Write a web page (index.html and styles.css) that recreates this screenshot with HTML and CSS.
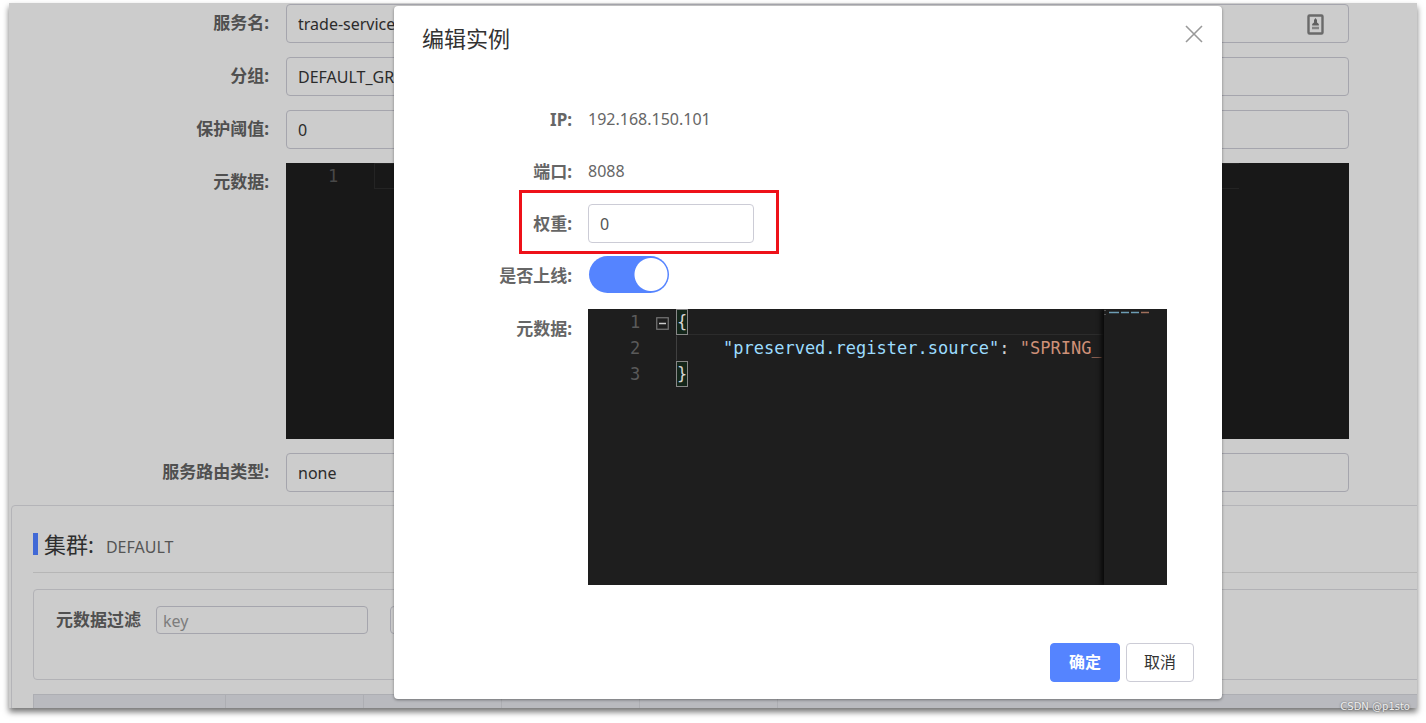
FILE: index.html
```html
<!DOCTYPE html>
<html lang="zh-CN">
<head>
<meta charset="utf-8">
<title>编辑实例</title>
<link rel="stylesheet" href="styles.css">
</head>
<body>
<div class="frame">
  <main class="page">
    <form class="service-form">
      <div class="row">
        <label class="label" for="svc-name">服务名:</label>
        <div class="field">
          <input class="input" id="svc-name" type="text" value="trade-service" readonly>
          <svg class="fill-icon" viewBox="0 0 17 21" aria-hidden="true">
            <rect x="1.5" y="1.5" width="14" height="18" rx="1" fill="none" stroke="#6a6a6a" stroke-width="2.4"/>
            <path d="M8.5 4l1.500 2v2.500l1.800 1.500v1.500H5.200V10L7 8.500V6z" fill="#606060"/>
            <path d="M5 14h7" stroke="#858585" stroke-width="2.500"/>
          </svg>
        </div>
      </div>
      <div class="row">
        <label class="label" for="svc-group">分组:</label>
        <div class="field"><input class="input" id="svc-group" type="text" value="DEFAULT_GROUP" readonly></div>
      </div>
      <div class="row">
        <label class="label" for="svc-threshold">保护阈值:</label>
        <div class="field"><input class="input" id="svc-threshold" type="text" value="0" readonly></div>
      </div>
      <div class="row">
        <span class="label">元数据:</span>
        <div class="field">
          <div class="editor editor-dim">
            <div class="gutter gutter-narrow"><span class="line-no">1</span></div>
            <div class="code"><div class="code-line current"></div></div>
            <div class="side"></div>
          </div>
        </div>
      </div>
      <div class="row">
        <label class="label" for="svc-route">服务路由类型:</label>
        <div class="field"><input class="input" id="svc-route" type="text" value="none" readonly></div>
      </div>
    </form>
    <section class="cluster">
      <h2 class="cluster-title"><span class="cluster-name">集群:</span><span class="cluster-value">DEFAULT</span></h2>
      <div class="filter">
        <label class="filter-label" for="filter-key">元数据过滤</label>
        <input class="filter-input" id="filter-key" type="text" placeholder="key">
        <input class="filter-input" type="text" aria-label="value">
      </div>
      <table class="table">
        <colgroup><col class="col-first"><col class="col"><col class="col"><col class="col"><col class="col"><col></colgroup>
        <thead><tr><th></th><th></th><th></th><th></th><th></th><th></th></tr></thead>
      </table>
    </section>
  </main>
  <div class="dialog" role="dialog" aria-labelledby="dialog-title">
    <header class="dialog-head">
      <h1 class="dialog-title" id="dialog-title">编辑实例</h1>
      <button class="close" type="button" aria-label="关闭">
        <svg viewBox="0 0 18 18" width="18" height="18"><path d="M1 1l16 16M17 1L1 17" stroke="#999" stroke-width="1.600" fill="none"/></svg>
      </button>
    </header>
    <form class="dialog-form">
      <div class="row"><span class="label">IP:</span><span class="value">192.168.150.101</span></div>
      <div class="row"><span class="label">端口:</span><span class="value">8088</span></div>
      <div class="row marked">
        <label class="label" for="weight">权重:</label>
        <input class="input weight" id="weight" type="text" value="0">
      </div>
      <div class="row switch-row">
        <label class="label" for="online">是否上线:</label>
        <input class="switch" id="online" type="checkbox" role="switch" checked>
      </div>
      <div class="row">
        <span class="label">元数据:</span>
        <div class="editor">
          <div class="gutter">
            <span class="line-no">1</span><span class="line-no">2</span><span class="line-no">3</span>
            <svg class="fold" viewBox="0 0 13 13" aria-hidden="true"><rect x=".75" y=".75" width="11.500" height="11.500" fill="none" stroke="#777" stroke-width="1.200"/><path d="M3 6.500h7" stroke="#ccc" stroke-width="1.500"/></svg>
          </div>
          <div class="code">
            <div class="code-line current"><span class="brace">{</span></div>
            <div class="code-line nested"><span class="key">"preserved.register.source"</span>: <span class="str">"SPRING_</span></div>
            <div class="code-line"><span class="brace">}</span></div>
          </div>
          <div class="minimap">
            <svg viewBox="0 0 63 8" width="63" height="8" aria-hidden="true">
              <path d="M1 1v1M1 5v1" stroke="#888"/>
              <path d="M5 3.500h30" stroke="#6d9db4" stroke-width="1.500" stroke-dasharray="10 2 8 2"/>
              <path d="M37 3.500h8" stroke="#a0705c" stroke-width="1.500"/>
            </svg>
          </div>
        </div>
      </div>
    </form>
    <footer class="dialog-foot">
      <button class="btn primary" type="button">确定</button>
      <button class="btn" type="button">取消</button>
    </footer>
  </div>
</div>
<span class="watermark">CSDN @p1sto</span>
</body>
</html>
```
FILE: styles.css
```css
*, *::before, *::after { box-sizing: border-box; }

body {
  margin: 0;
  padding: 3px 9px 15px;
  min-height: 100vh;
  position: relative;
  display: flex;
  background: #fff;
  color: #666;
  font: 16px/24px "Noto Sans", "Noto Sans CJK SC", sans-serif;
}

h1, h2 { margin: 0; font-weight: 400; }
input, button { font: inherit; }

.frame {
  flex: 1;
  min-width: 0;
  position: relative;
  background: #ccc;
  box-shadow: 0 4px 6px rgba(0, 0, 0, .55);
}

.page {
  position: absolute;
  inset: 0;
  overflow: hidden;
}

.service-form {
  display: flex;
  flex-direction: column;
  gap: 14px;
  padding: 1px 68px 13px 0;
}

.row {
  display: flex;
  align-items: flex-start;
}

.label {
  flex: none;
  width: 260px;
  margin-right: 17px;
  text-align: right;
  font-size: 17px;
  font-weight: 700;
  line-height: 39px;
}

.page .label {
  color: #505050;
  line-height: 38px;
}

.field {
  flex: 1;
  min-width: 0;
  position: relative;
}

.input {
  display: block;
  width: 100%;
  height: 39px;
  padding: 0 11px;
  border: 1px solid #a5a5ad;
  border-radius: 4px;
  background: transparent;
  color: #2b2b2b;
}

.fill-icon {
  position: absolute;
  top: 10px;
  right: 25px;
  width: 17px;
  height: 21px;
}

.editor {
  flex: 1;
  min-width: 0;
  height: 276px;
  display: flex;
  overflow: hidden;
  background: #1e1e1e;
  color: #d4d4d4;
  font: 17px/26px "DejaVu Sans Mono", monospace;
}

.editor-dim { background: #181818; }

.gutter {
  flex: none;
  width: 88px;
  padding-left: 42px;
  position: relative;
  color: #5a5a5a;
}

.gutter-narrow { color: #484848; }
.line-no { display: block; }

.fold {
  position: absolute;
  left: 68px;
  top: 8px;
  width: 13px;
  height: 13px;
}

.code {
  flex: 1;
  min-width: 0;
  overflow: hidden;
}

.code-line {
  height: 26px;
  border: 1px solid transparent;
  line-height: 24px;
  white-space: pre;
}

.current { border-bottom-color: #2c2c2c; }
.editor-dim .current { border-color: #242424; border-right: 0; }
.nested { padding-left: 46px; border-left-color: #404040; }
.key { color: #9cdcfe; }
.str { color: #ce9178; }

.brace {
  display: inline-block;
  background: #14261a;
  outline: 1px solid #888;
}

.side { width: 110px; }

.minimap {
  flex: none;
  width: 63px;
  line-height: 0;
  box-shadow: -3px 0 4px #0a0a0a;
}

.cluster {
  margin: 0 -20px 0 2px;
  padding: 0 0 20px 21px;
  border: 1px solid #b4b4b8;
  border-radius: 4px;
}

.cluster-title {
  display: flex;
  align-items: center;
  height: 67px;
  padding-top: 10px;
  border-bottom: 1px solid #b6b6b6;
  font-size: 16px;
}

.cluster-name {
  padding-left: 6px;
  border-left: 5px solid #4169d6;
  color: #2e2e2e;
  font-size: 22px;
  line-height: 22px;
}

.cluster-value {
  margin: 5px 0 0 12px;
  color: #555;
}

.filter {
  display: flex;
  align-items: flex-start;
  height: 91px;
  margin: 16px 0 14px;
  padding: 16px 22px;
  border: 1px solid #b2b2b6;
  border-radius: 4px;
}

.filter-label {
  margin-right: 15px;
  color: #505050;
  font-size: 17px;
  font-weight: 700;
  line-height: 28px;
}

.filter-input {
  width: 212px;
  height: 28px;
  margin-right: 22px;
  padding: 2px 6px 0;
  border: 1px solid #a5a5ad;
  border-radius: 4px;
  background: transparent;
}

.filter-input::placeholder { color: #7d7d7d; }

.table {
  width: 100%;
  table-layout: fixed;
  border-collapse: collapse;
}

.table th {
  height: 40px;
  border: 1px solid #adaeb3;
  background: #b9babf;
}

.col-first { width: 192px; }
.col { width: 138px; }

.dialog {
  position: absolute;
  top: 3px;
  right: 195px;
  bottom: 9px;
  left: 385px;
  display: flex;
  flex-direction: column;
  border-radius: 4px;
  background: #fff;
  box-shadow: 0 1px 3px rgba(0, 0, 0, .4);
}

.dialog-head {
  display: flex;
  justify-content: space-between;
  align-items: flex-start;
  padding: 16px 18px 0 28px;
}

.dialog-title {
  color: #333;
  font-size: 22px;
  line-height: 32px;
}

.close {
  display: flex;
  padding: 3px 1px;
  border: 0;
  background: none;
}

.dialog-form {
  display: flex;
  flex-direction: column;
  gap: 13px;
  padding: 46px 55px 0 0;
}

.dialog .label {
  width: 178px;
  margin-right: 16px;
}

.value { line-height: 38px; }

.dialog-form .row { min-height: 39px; }

.marked { position: relative; }

.marked::after {
  content: "";
  position: absolute;
  top: -14px;
  left: 125px;
  width: 260px;
  height: 64px;
  border: 3px solid #ee1119;
  pointer-events: none;
}

.weight {
  width: 166px;
  border-color: #ccccd6;
  color: #555;
}

.switch {
  appearance: none;
  width: 80px;
  height: 37px;
  margin: 0 1px;
  border-radius: 19px;
  background: radial-gradient(circle at 62px 50%, #fff 16px, #5584ff 17px);
}

.dialog-form .switch-row { min-height: 40px; }

.dialog-foot {
  display: flex;
  justify-content: flex-end;
  gap: 6px;
  margin-top: auto;
  padding: 0 28px 17px;
}

.btn {
  height: 39px;
  padding: 0 17px 2px;
  border: 1px solid #ccccd6;
  border-radius: 4px;
  background: #fff;
  color: #333;
}

.primary {
  padding: 0 18px 2px;
  border-color: #5584ff;
  background: #5584ff;
  color: #fff;
  font-weight: 700;
}

.watermark {
  position: absolute;
  right: 16px;
  bottom: 8px;
  color: #eee;
  font: 10px/16px "DejaVu Sans", sans-serif;
  text-shadow: 0 0 2px #555;
}
```
